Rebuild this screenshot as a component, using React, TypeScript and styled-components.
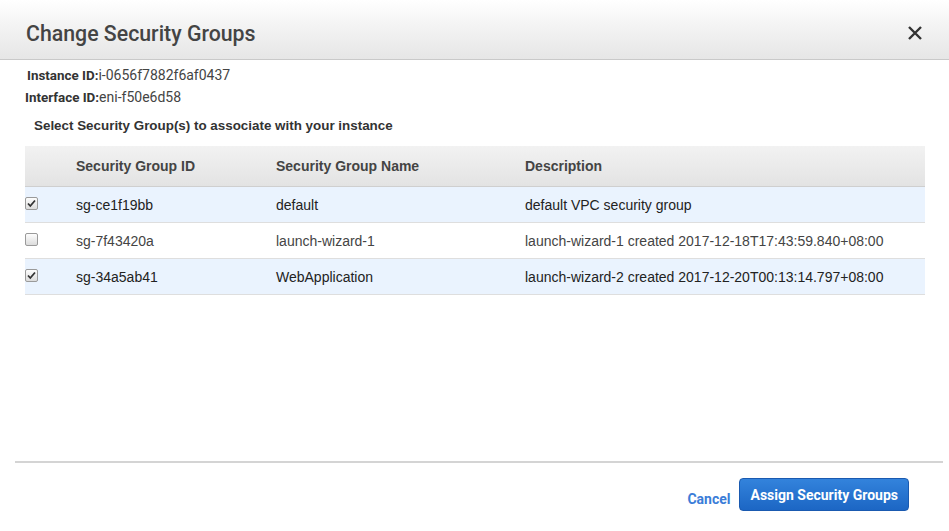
import styled, { createGlobalStyle } from 'styled-components'

const GlobalStyle = createGlobalStyle`
  html, body {
    margin: 0;
    padding: 0;
    background: #fff;
  }
  body {
    font-family: "Liberation Sans", Arial, sans-serif;
  }
`

const Modal = styled.div`
  width: 949px;
  height: 531px;
  display: flex;
  flex-direction: column;
  background: #fff;
`

const Header = styled.div`
  height: 60px;
  box-sizing: border-box;
  display: flex;
  align-items: center;
  justify-content: space-between;
  padding: 7px 26px 0 26px;
  background: linear-gradient(to bottom, #ffffff 0%, #f3f3f3 45%, #e6e6e6 100%);
  border-bottom: 1px solid #c9c9c9;
`

const Title = styled.h1`
  margin: 0;
  font-family: Roboto, "Liberation Sans", sans-serif;
  font-weight: 500;
  font-size: 21.3px;
  color: #444;
`

const Close = styled.button`
  border: 0;
  background: none;
  padding: 0;
  width: 16px;
  height: 16px;
  cursor: pointer;
  display: flex;
`

const Body = styled.div`
  flex: 1;
  padding: 4px 24px 0 25px;
`

const Meta = styled.div<{ $indent?: number }>`
  font-family: Roboto, "Liberation Sans", sans-serif;
  font-size: 14px;
  color: #444;
  height: 22px;
  line-height: 22px;
  padding-left: ${(p) => p.$indent ?? 0}px;
`

const MetaLabel = styled.b`
  font-weight: 700;
  font-size: 13.4px;
  color: #333;
`

const Lead = styled.p`
  margin: 9px 0 11px 9px;
  font-size: 13.4px;
  font-weight: 700;
  color: #333;
  line-height: 18px;
`

const Table = styled.table`
  width: 900px;
  border-collapse: collapse;
  font-size: 14px;
`

const HeadCell = styled.th<{ $w?: number }>`
  height: 40px;
  width: ${(p) => (p.$w ? `${p.$w}px` : 'auto')};
  padding: 0;
  text-align: left;
  font-weight: 700;
  color: #444;
  background: linear-gradient(to bottom, #f2f2f2 0%, #e3e3e3 100%);
  border-bottom: 1px solid #cfcfcf;
`

const Row = styled.tr<{ $selected: boolean }>`
  height: 36px;
  background: ${(p) => (p.$selected ? '#eaf3fe' : '#fff')};
  color: ${(p) => (p.$selected ? '#222' : '#444')};
  border-bottom: 1px solid #dedede;
`

const Cell = styled.td`
  padding: 0;
  vertical-align: middle;
`

const Check = styled.span`
  display: block;
  width: 11px;
  height: 11px;
  border: 1px solid #9a9a9a;
  border-radius: 2px;
  background: linear-gradient(to bottom, #fdfdfd, #dcdcdc);
  position: relative;
  margin-top: -2px;
`

const Tick = styled.svg`
  position: absolute;
  left: 0;
  top: 0;
`

const Footer = styled.div`
  margin: 0 6px 0 15px;
  border-top: 2px solid #d4d4d4;
  height: 70px;
  box-sizing: border-box;
  display: flex;
  align-items: flex-start;
  justify-content: flex-end;
  gap: 9px;
  padding: 15px 34px 0 0;
`

const CancelLink = styled.a`
  font-family: Roboto, "Liberation Sans", sans-serif;
  font-weight: 700;
  font-size: 14px;
  color: #3b7dd8;
  margin-top: 13px;
  cursor: pointer;
`

const PrimaryButton = styled.button`
  height: 33px;
  padding: 0 10px;
  border: 1px solid #1a5ab0;
  border-radius: 4px;
  background: linear-gradient(to bottom, #3383dc 0%, #1c66c4 100%);
  color: #fff;
  font-family: Roboto, "Liberation Sans", sans-serif;
  font-weight: 700;
  font-size: 14px;
  cursor: pointer;
`

const groups = [
  { id: 'sg-ce1f19bb', name: 'default', desc: 'default VPC security group', checked: true },
  { id: 'sg-7f43420a', name: 'launch-wizard-1', desc: 'launch-wizard-1 created 2017-12-18T17:43:59.840+08:00', checked: false },
  { id: 'sg-34a5ab41', name: 'WebApplication', desc: 'launch-wizard-2 created 2017-12-20T00:13:14.797+08:00', checked: true },
]

const App = () => {
  return (
    <Modal>
      <GlobalStyle />
      <Header>
        <Title>Change Security Groups</Title>
        <Close aria-label="Close">
          <svg width="16" height="16" viewBox="0 0 16 16">
            <path d="M2 2 L14 14 M14 2 L2 14" stroke="#333" strokeWidth="2.4" />
          </svg>
        </Close>
      </Header>
      <Body>
        <Meta $indent={2}>
          <MetaLabel>Instance ID:</MetaLabel>i-0656f7882f6af0437
        </Meta>
        <Meta>
          <MetaLabel>Interface ID:</MetaLabel>eni-f50e6d58
        </Meta>
        <Lead>Select Security Group(s) to associate with your instance</Lead>
        <Table>
          <thead>
            <tr>
              <HeadCell $w={51} />
              <HeadCell $w={200}>Security Group ID</HeadCell>
              <HeadCell $w={249}>Security Group Name</HeadCell>
              <HeadCell>Description</HeadCell>
            </tr>
          </thead>
          <tbody>
            {groups.map((g) => (
              <Row key={g.id} $selected={g.checked}>
                <Cell>
                  <Check>
                    {g.checked && (
                      <Tick width="11" height="11" viewBox="0 0 11 11">
                        <path d="M2 5.5 L4.3 8 L9 2.5" stroke="#333" strokeWidth="1.8" fill="none" />
                      </Tick>
                    )}
                  </Check>
                </Cell>
                <Cell>{g.id}</Cell>
                <Cell>{g.name}</Cell>
                <Cell>{g.desc}</Cell>
              </Row>
            ))}
          </tbody>
        </Table>
      </Body>
      <Footer>
        <CancelLink>Cancel</CancelLink>
        <PrimaryButton>Assign Security Groups</PrimaryButton>
      </Footer>
    </Modal>
  )
}

export default App
